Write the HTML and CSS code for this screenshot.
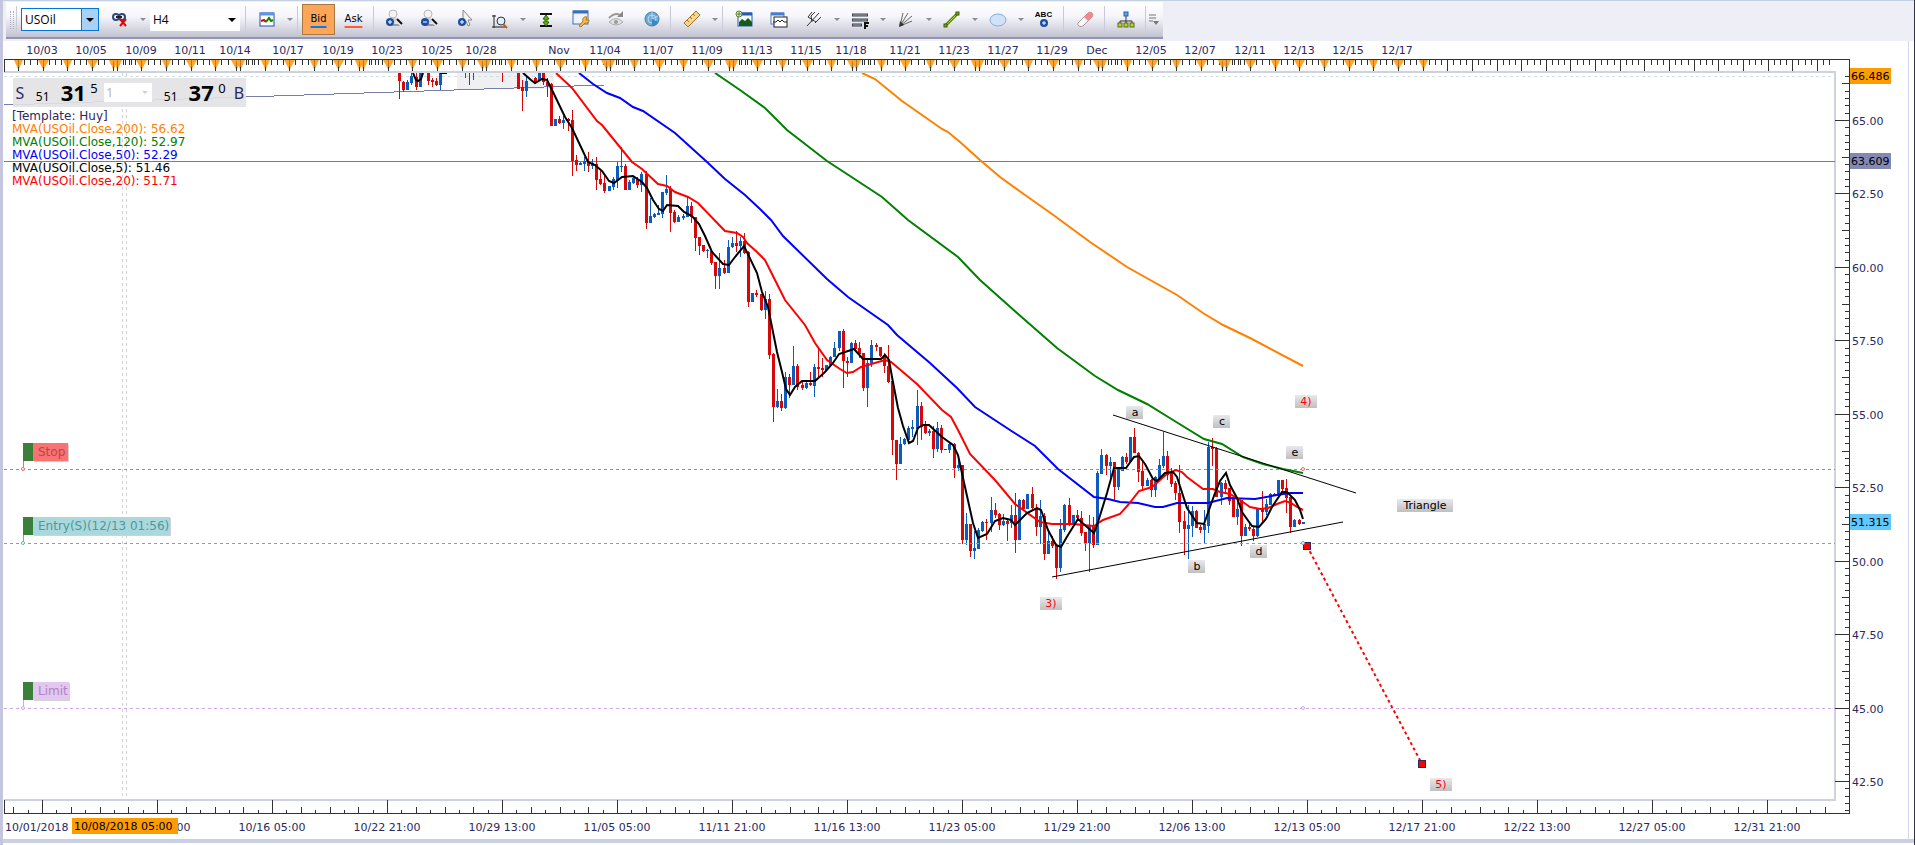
FILE: index.html
```
<!DOCTYPE html>
<html lang="en">
<head>
    <meta charset="UTF-8">
    <meta name="viewport" content="width=device-width, initial-scale=1.0">
    <title>USOil H4</title>
    <link rel="stylesheet" href="styles.css">
</head>
<body>

    <header class="toolbar-band">
        <div class="toolbar">
            <span class="grip"></span>
            <span class="sep"></span>
            <div class="symbol-box">
                <input type="text" value="USOil" aria-label="Symbol">
                <button type="button" aria-label="Choose symbol"><i class="caret black"></i></button>
            </div>
            <button type="button" class="tool drop" aria-label="Unlink">
                <svg width="20" height="24" viewBox="0 0 20 24">
                    <g fill="none" stroke="#2c4a78" stroke-width="2"><circle cx="6" cy="9" r="3"/><circle cx="12" cy="9" r="3"/></g>
                    <path d="M6 9h6" stroke="#222" stroke-width="2"/>
                    <path d="M10 11l6 7M16 11l-6 7" stroke="#e00" stroke-width="2"/>
                </svg><i class="caret"></i>
            </button>
            <div class="period-box">
                <select aria-label="Period"><option>H4</option></select>
                <i class="caret black"></i>
            </div>
            <span class="sep"></span>
            <button type="button" class="tool drop" aria-label="Chart type">
                <svg width="20" height="24" viewBox="0 0 20 24">
                    <rect x="3" y="5" width="14" height="13" fill="#fff" stroke="#1f4fae"/>
                    <path d="M3 6h14" stroke="#5e93e6" stroke-width="3"/>
                    <path d="M4 13l3-1 2 2" fill="none" stroke="#e00" stroke-width="2"/>
                    <path d="M9 14l3-4 2 3 2-1" fill="none" stroke="#080" stroke-width="2"/>
                </svg><i class="caret"></i>
            </button>
            <span class="sep"></span>
            <button type="button" class="tool price active">Bid</button>
            <button type="button" class="tool price ask">Ask</button>
            <span class="sep"></span>
            <button type="button" class="tool" aria-label="Zoom in">
                <svg width="20" height="24" viewBox="0 0 20 24">
                    <path d="M6 13l3-4 3 2-2 5z" fill="#d2d2d6"/>
                    <circle cx="8" cy="6" r="4" fill="#f4f4f4" stroke="#b8b8b8"/>
                    <path d="M12 11l5 5" stroke="#111" stroke-width="2"/><path d="M5 16h8l2 2H4z" fill="#9a9aa6"/>
                    <circle cx="5" cy="14" r="4" fill="#1c4fa4"/><path d="M3 14h4M5 12v4" stroke="#fff"/>
                </svg>
            </button>
            <button type="button" class="tool" aria-label="Zoom out">
                <svg width="20" height="24" viewBox="0 0 20 24">
                    <path d="M6 13l3-4 3 2-2 5z" fill="#d2d2d6"/>
                    <circle cx="8" cy="6" r="4" fill="#f4f4f4" stroke="#b8b8b8"/>
                    <path d="M12 11l5 5" stroke="#111" stroke-width="2"/><path d="M5 16h8l2 2H4z" fill="#9a9aa6"/>
                    <circle cx="5" cy="14" r="4" fill="#1c4fa4"/><path d="M3 14h4" stroke="#fff"/>
                </svg>
            </button>
            <button type="button" class="tool" aria-label="Add pointer">
                <svg width="20" height="24" viewBox="0 0 20 24">
                    <path d="M8 2v14l3-3 2 5 2-1-2-5h4z" fill="#f4f4f4" stroke="#888"/>
                    <circle cx="7" cy="14" r="4" fill="#1c4fa4"/><path d="M5 14h4M7 12v4" stroke="#fff"/>
                </svg>
            </button>
            <button type="button" class="tool drop" aria-label="Zoom area">
                <svg width="20" height="24" viewBox="0 0 20 24">
                    <path d="M4 7v13M2 8h4M2 19h14" fill="none" stroke="#222"/>
                    <circle cx="11" cy="13" r="4" fill="#d9f1fb" stroke="#333"/><path d="M13 16l4 4" stroke="#b5651d" stroke-width="2"/>
                </svg><i class="caret"></i>
            </button>
            <button type="button" class="tool" aria-label="Fit height">
                <svg width="20" height="24" viewBox="0 0 20 24">
                    <path d="M4 6h12M4 18h12" stroke="#111" stroke-width="2"/>
                    <path d="M10 7l3 4h-2v3h2l-3 4-3-4h2v-3H7z" fill="#6a2" stroke="#260"/>
                </svg>
            </button>
            <button type="button" class="tool" aria-label="Chart properties">
                <svg width="20" height="24" viewBox="0 0 20 24">
                    <rect x="2" y="3" width="15" height="13" fill="#eef4ff" stroke="#3a6cc0"/><path d="M2 4h15" stroke="#3a6cc0" stroke-width="3"/>
                    <path d="M8 18l4-5a3 3 0 0 1 4-4l-1 3 3 0a3 3 0 0 1-4 3l-4 4z" fill="#f6bd3c" stroke="#b47a10"/>
                </svg>
            </button>
            <button type="button" class="tool" aria-label="Refresh view">
                <svg width="20" height="24" viewBox="0 0 20 24">
                    <path d="M3 14q7-7 14 0q-7 6-14 0z" fill="#e2e2e2" stroke="#aaa"/><circle cx="10" cy="14" r="2" fill="#999"/>
                    <path d="M3 10q6-6 11-3" fill="none" stroke="#999" stroke-width="2"/><path d="M17 3v6h-6z" fill="#888"/>
                </svg>
            </button>
            <button type="button" class="tool" aria-label="Trade zones">
                <svg width="20" height="24" viewBox="0 0 20 24">
                    <circle cx="11" cy="11" r="7" fill="#6fa9d4" stroke="#3d7db2"/>
                    <g fill="none" stroke="#b9daf0"><circle cx="11" cy="11" r="4"/><path d="M11 11V4M11 11l6-3"/></g><path d="M11 11l6 3a7 7 0 0 1-6 4z" fill="#3d87c0"/>
                </svg>
            </button>
            <span class="sep"></span>
            <button type="button" class="tool drop" aria-label="Ruler">
                <svg width="20" height="24" viewBox="0 0 20 24">
                    <path d="M2 15L14 3l4 4L6 19z" fill="#f4d58e" stroke="#a5722a"/>
                    <path d="M5 12l2 2M8 9l2 2M11 6l2 2" stroke="#a5722a"/>
                </svg><i class="caret"></i>
            </button>
            <span class="sep"></span>
            <button type="button" class="tool" aria-label="Save picture">
                <svg width="20" height="24" viewBox="0 0 20 24">
                    <rect x="4" y="5" width="14" height="13" fill="#f3f8ff" stroke="#2a5ab0"/><path d="M4 6h14" stroke="#2a5ab0" stroke-width="3"/>
                    <path d="M5 18v-4l3-3 3 2 3-3 4 4v4z" fill="#175c17"/>
                    <circle cx="5" cy="6" r="3" fill="#e9f5d8" stroke="#577f22"/><path d="M5 4v4M3 6h4" stroke="#577f22"/>
                </svg>
            </button>
            <button type="button" class="tool" aria-label="Add window">
                <svg width="20" height="24" viewBox="0 0 20 24">
                    <rect x="2" y="5" width="13" height="11" fill="#fff" stroke="#4a7bd0"/><path d="M2 6h13" stroke="#4a7bd0" stroke-width="3"/>
                    <rect x="5" y="9" width="13" height="10" fill="#fff" stroke="#222"/><path d="M4 14h3l2-2 2 2 2-2 2 2h3" fill="none" stroke="#222"/>
                </svg>
            </button>
            <button type="button" class="tool drop" aria-label="Pitchfork">
                <svg width="20" height="24" viewBox="0 0 20 24">
                    <path d="M3 18L15 5M4 9l8 5M4 9l4-5M8 14l-1-6 4-4M11 15l6-6" fill="none" stroke="#333"/>
                </svg><i class="caret"></i>
            </button>
            <button type="button" class="tool drop" aria-label="Fibonacci levels">
                <svg width="20" height="24" viewBox="0 0 20 24">
                    <path d="M2 7h16M2 12h16M2 17h10" stroke="#3b4048" stroke-width="3"/>
                    <path d="M3 7h14M3 12h14M3 17h8" stroke="#aab0ba"/>
                    <path d="M15 21v-6h4M15 18h3" fill="none" stroke="#111" stroke-width="2"/>
                </svg><i class="caret"></i>
            </button>
            <button type="button" class="tool drop" aria-label="Fan">
                <svg width="20" height="24" viewBox="0 0 20 24">
                    <path d="M4 18L7 5M4 18L12 5M4 18L16 8M4 18l12-5" stroke="#666"/><path d="M3 19l1-6 4 4z" fill="#333"/>
                </svg><i class="caret"></i>
            </button>
            <button type="button" class="tool drop" aria-label="Line">
                <svg width="20" height="24" viewBox="0 0 20 24">
                    <path d="M4 17L15 6" stroke="#567d0e" stroke-width="3"/><path d="M4 17L15 6" stroke="#b5d334"/>
                    <g fill="#7fa51c" stroke="#3f5c08"><rect x="2" y="16" width="3" height="3"/><rect x="14" y="4" width="3" height="3"/></g>
                </svg><i class="caret"></i>
            </button>
            <button type="button" class="tool drop" aria-label="Ellipse">
                <svg width="20" height="24" viewBox="0 0 20 24">
                    <ellipse cx="10" cy="12" rx="8" ry="6" fill="#cfe2f6" stroke="#86abd8"/>
                </svg><i class="caret"></i>
            </button>
            <button type="button" class="tool abc" aria-label="Add text">
                <span>ABC</span>
                <svg width="8" height="10" viewBox="0 0 8 10"><circle cx="4" cy="4" r="4" fill="#1c4fa4"/><path d="M2 4h4M4 2v4" stroke="#fff"/></svg>
            </button>
            <span class="sep"></span>
            <button type="button" class="tool" aria-label="Erase">
                <svg width="20" height="24" viewBox="0 0 20 24">
                    <path d="M3 15L13 5q2-2 4 0t0 4L8 18q-2 1-4 0t-1-3z" fill="#fafafa" stroke="#a99"/>
                    <path d="M9 9l4-4q2-2 4 0t0 4l-4 4z" fill="#f08a8a"/>
                </svg>
            </button>
            <span class="sep"></span>
            <button type="button" class="tool" aria-label="Strategy tree">
                <svg width="20" height="24" viewBox="0 0 20 24">
                    <path d="M10 8v8M4 17v-4h12v4" fill="none" stroke="#333"/>
                    <rect x="8" y="4" width="4" height="4" fill="#5aa0ee" stroke="#2563b0"/>
                    <g fill="#b9cf3c" stroke="#57700c"><rect x="2" y="15" width="4" height="4"/><rect x="8" y="15" width="4" height="4"/><rect x="14" y="15" width="4" height="4"/></g>
                </svg>
            </button>
            <span class="sep"></span>
            <button type="button" class="more" aria-label="More buttons">
                <svg width="10" height="12" viewBox="0 0 10 12"><path d="M0 1h7M0 4h7M0 7h4" stroke="#777"/><path d="M4 7h6l-3 4z" fill="#777"/></svg>
            </button>
        </div>
    </header>

    <main class="chart" id="chart">
        <svg class="canvas" id="canvas"></svg>

        <div class="quote">
            <button type="button" class="side">S</button>
            <span class="small">51</span><strong>31</strong><sup>5</sup>
            <div class="amount">
                <select aria-label="Amount"><option>1</option></select>
                <i class="caret"></i>
            </div>
            <span class="small">51</span><strong>37</strong><sup>0</sup>
            <button type="button" class="side">B</button>
        </div>

        <ul class="legend">
            <li>[Template: Huy]</li>
            <li class="mva200">MVA(USOil.Close,200): 56.62</li>
            <li class="mva120">MVA(USOil.Close,120): 52.97</li>
            <li class="mva50">MVA(USOil.Close,50): 52.29</li>
            <li class="mva5">MVA(USOil.Close,5): 51.46</li>
            <li class="mva20">MVA(USOil.Close,20): 51.71</li>
        </ul>
    </main>

    <div class="bottom-edge"></div>

    <script src="chart.js"></script>
</body>
</html>
```
FILE: styles.css
```
* {
    box-sizing: border-box;
}

body {
    display: flex;
    flex-direction: column;
    min-height: 100vh;
    margin: 0;
    border-left: 3px solid #c3c6dc;
    border-right: 1px solid #333344;
    background: white;
    font-family: "DejaVu Sans", Verdana, sans-serif;
    font-size: 11px;
    color: #2b2860;
}

button, input, select {
    margin: 0;
    padding: 0;
    border: none;
    background: none;
    font: inherit;
    color: inherit;
    appearance: none;
}

/* Toolbar */
.toolbar-band {
    height: 41px;
    padding: 1px 0 0 3px;
    background: #eeeef6;
    border-top: 1px solid #c3cfe2;
}

.toolbar {
    display: flex;
    align-items: center;
    width: max-content;
    height: 37px;
    padding-left: 4px;
    background: linear-gradient(white, #f6f6fb 40%, #c2c3d2);
    border-bottom: 2px solid #9495ab;
}

.grip {
    width: 4px;
    height: 18px;
    border-left: 1px dotted #aaaabc;
    border-right: 1px dotted #aaaabc;
}

.sep {
    width: 1px;
    height: 28px;
    margin: 0 3px 0 2px;
    background: #c9cad8;
}

.symbol-box {
    display: flex;
    width: 78px;
    height: 23px;
    margin: 0 3px 0 1px;
    border: 1px solid #0078d7;
    background: white;
    font-family: "Open Sans", sans-serif;
    font-size: 12px;
    color: black;
}

.symbol-box input {
    flex: 1;
    min-width: 0;
    padding-left: 3px;
}

.symbol-box button {
    display: flex;
    align-items: center;
    justify-content: center;
    width: 17px;
    border-left: 1px solid #0078d7;
    background: #a9d1f5;
}

.caret {
    width: 0;
    height: 0;
    border: 3px solid transparent;
    border-top-color: #8a8b9a;
    border-bottom: none;
}

.caret.black {
    border-width: 4px 4px 0;
    border-top-color: black;
}

.period-box {
    display: flex;
    align-items: center;
    width: 90px;
    height: 22px;
    margin: 0 3px 0 2px;
    padding-right: 4px;
    background: white;
    font-family: "Open Sans", sans-serif;
    font-size: 12px;
    color: black;
}

.period-box select {
    flex: 1;
    padding-left: 3px;
}

.tool {
    display: flex;
    align-items: center;
    justify-content: center;
    width: 35px;
    height: 31px;
}

.tool.drop {
    justify-content: flex-start;
    width: 46px;
    padding-left: 8px;
    gap: 10px;
}

.tool.price {
    padding-bottom: 2px;
    font-size: 10px;
    line-height: 12px;
    color: black;
    text-decoration: underline 2px #ff5a36;
    text-underline-offset: 4px;
}

.tool.price.active {
    width: 33px;
    margin: 0 1px;
    background: #fda65a;
    border: 1px solid #a8793c;
    text-decoration-color: #0a7ae6;
}

.abc {
    flex-direction: column;
    align-items: center;
    font-family: "Liberation Sans", sans-serif;
    font-size: 8px;
    font-weight: bold;
    line-height: 8px;
    color: black;
}

.more {
    display: flex;
    align-items: center;
    width: 14px;
    height: 31px;
}

/* Chart */
.chart {
    position: relative;
    flex: 1;
    margin: 0 6px 0 1px;
    box-shadow: 1px 0 #d4d8ee;
}

.canvas {
    display: block;
    position: absolute;
    width: 100%;
    height: 100%;
}

.canvas text {
    fill: #2b2860;
}

.canvas .dark { fill: black; }
.canvas .red { fill: red; }
.canvas .order { font-size: 12px; }
.canvas .stop { fill: #b44848; }
.canvas .entry { fill: #4a9a9c; }
.canvas .limit { fill: #b083c8; }

.quote {
    position: absolute;
    left: 9px;
    top: 37px;
    display: flex;
    align-items: center;
    width: 233px;
    height: 29px;
    background: rgba(226, 226, 230, 0.9);
    font-family: "Noto Sans", sans-serif;
    font-size: 12px;
    color: black;
}

.side {
    width: 14px;
    margin-right: 9px;
    font-size: 16px;
    color: #2b2860;
}

.quote .small {
    width: 25px;
    padding-top: 8px;
}

.quote strong {
    width: 30px;
    font-size: 22px;
    line-height: 29px;
}

.quote sup {
    align-self: flex-start;
    width: 14px;
    font-size: 13px;
    line-height: 20px;
}

.amount {
    display: flex;
    align-items: center;
    width: 48px;
    height: 19px;
    margin-right: 12px;
    padding: 0 4px 0 2px;
    background: white;
    color: #b4b4b4;
}

.amount .caret {
    border-top-color: #d0d0d0;
}

.amount select {
    flex: 1;
}

.quote .side:last-child {
    margin: 0;
}

.legend {
    position: absolute;
    left: 8px;
    top: 69px;
    margin: 0;
    padding: 0;
    list-style: none;
    font-size: 12px;
    line-height: 13px;
}

.mva200 { color: #ff8000; }
.mva120 { color: green; }
.mva50 { color: blue; }
.mva5 { color: black; }
.mva20 { color: red; }

.bottom-edge {
    height: 4px;
    margin-bottom: 2px;
    background: #c9d0e4;
}
```
FILE: chart.js
```
// Bars: index, high, body top, body bottom, low, direction
const bars = `-83 73 73 81 99 d;-82 81 82 90 92 d;-81 80 82 90 90 u;-80 73 76 83 85 u;-79 73 77 87 90 d;-78 73 73 87 87 u
-76 73 73 81 85 d;-75 78 80 82 87 d;-74 78 81 85 86 d;-73 73 73 85 90 u;-67 73 73 73 78 u;-66 73 73 73 85 d;-65 73 73 73 80 u;-58 73 73 73 82 d
-54 73 73 89 89 d;-53 80 87 91 111 d;-52 77 81 91 97 u;-50 77 78 82 84 d;-49 73 73 80 80 u;-48 73 73 82 85 d;-47 78 82 86 97 d
-46 83 84 126 126 d;-45 119 119 126 126 u;-44 116 119 123 124 d;-43 116 120 123 129 u;-42 118 119 121 131 d;-41 110 120 161 176 d
-40 155 160 165 171 d;-39 162 163 165 165 u;-38 157 161 164 171 u;-37 152 161 166 172 d;-36 159 163 166 169 u;-35 157 164 180 190 d
-34 171 179 184 185 d;-33 175 183 191 193 d;-32 186 186 191 191 u;-31 177 179 187 190 u;-30 162 166 180 188 u;-29 147 166 167 172 u
-28 164 166 190 190 d;-27 180 182 190 190 u;-26 176 178 183 184 u;-25 177 179 185 188 d;-24 172 174 185 192 u;-23 171 174 223 229 d
-22 198 216 223 223 u;-21 213 214 217 218 u;-20 205 213 215 215 u;-19 192 192 214 218 u;-18 175 189 193 195 u;-17 186 189 213 232 d
-16 210 212 222 223 d;-15 215 217 222 222 u;-14 214 216 218 220 u;-13 197 206 217 217 u;-12 202 206 217 223 d;-11 217 217 238 251 d
-10 237 237 246 255 d;-9 245 245 251 252 d;-8 249 250 251 258 u;-7 250 251 263 265 d;-6 262 262 276 289 d;-5 253 268 276 289 u
-4 260 268 273 274 d;-3 240 247 273 273 u;-2 237 243 247 248 u;-1 231 243 246 252 d;0 237 241 246 257 u;1 233 241 253 254 d
2 251 252 302 307 d;3 293 293 302 302 u;4 290 293 295 297 d;5 294 294 310 311 d;6 291 299 310 319 u;7 294 299 355 359 d
8 353 354 407 422 d;9 389 401 407 408 u;10 394 401 408 411 d;11 372 377 408 409 u;12 374 377 385 398 d;13 346 366 385 385 u
14 364 366 387 390 d;15 382 385 388 390 d;16 382 383 388 389 u;17 372 383 385 386 d;18 364 367 386 397 u;19 348 367 369 378 d
20 358 368 370 377 d;21 365 365 370 370 u;22 356 357 365 367 u;23 342 348 357 357 u;24 331 331 348 351 u;25 329 331 361 388 d
26 357 361 363 377 d;27 342 343 363 363 u;28 340 343 349 351 d;29 342 348 354 358 d;30 353 353 388 391 d;31 358 363 388 407 u
32 340 345 363 367 u;33 343 345 347 351 d;34 347 347 356 357 d;35 353 355 366 373 d;36 345 366 382 383 d;37 381 381 440 455 d
38 440 440 464 480 d;39 437 444 464 464 u;40 438 439 444 445 u;41 426 428 440 441 u;42 420 427 429 437 u;43 390 406 429 445 u
44 402 406 427 440 d;45 421 426 433 434 d;46 429 431 433 436 u;47 426 431 449 458 d;48 422 428 449 452 u;49 425 428 450 453 d
50 449 449 450 450 d;51 443 444 450 453 u;52 443 444 468 478 d;53 456 465 468 471 u;54 465 465 540 544 d;55 513 524 540 545 u
56 524 524 551 557 d;57 531 548 551 559 u;58 528 530 549 549 u;59 521 522 531 532 u;60 519 522 523 540 d;61 497 510 523 532 u
62 503 510 515 518 d;63 513 514 525 530 d;64 514 521 525 526 u;65 519 521 524 541 d;66 505 515 523 528 u;67 493 515 540 553 d
68 499 500 540 540 u;69 499 500 509 510 d;70 494 494 509 509 u;71 487 494 508 510 d;72 504 508 527 536 d;73 500 516 527 544 u
74 513 516 554 560 d;75 532 541 554 554 u;76 536 541 546 548 d;77 544 545 568 579 d;78 519 529 568 572 u;79 504 505 530 532 u
80 498 505 525 526 d;81 515 515 525 526 u;82 510 515 518 520 d;83 511 518 533 536 d;84 532 532 543 551 d;85 515 526 543 572 u
86 517 526 545 548 d;87 471 473 545 545 u;88 449 455 474 474 u;89 454 455 466 475 d;90 457 462 466 478 u;91 462 462 487 500 d
92 469 469 487 490 u;93 456 457 471 471 u;94 453 457 462 464 d;95 437 437 462 463 u;96 428 437 453 453 d;97 452 453 472 482 d
98 461 471 486 490 d;99 478 480 486 486 u;100 479 480 490 497 d;101 476 477 490 497 u;102 459 465 478 480 u;103 432 456 466 468 u
104 451 456 475 480 d;105 468 472 484 487 d;106 481 483 493 500 d;107 465 493 522 533 d;108 511 521 529 555 d;109 505 525 529 559 u
110 506 511 526 537 u;111 510 511 528 528 d;112 525 527 530 533 d;113 510 524 530 543 u;114 442 447 526 533 u;115 438 447 449 466 d
116 447 448 497 497 d;117 482 483 497 505 u;118 480 483 489 493 d;119 488 488 501 505 d;120 496 497 517 517 d;121 497 509 517 525 u
122 500 500 536 546 d;123 524 527 536 536 u;124 523 527 529 531 d;125 527 529 536 541 d;126 509 509 536 537 u;127 491 509 512 524 d
128 499 504 512 515 u;129 493 494 505 505 u;130 493 494 495 496 d;131 480 480 494 494 u;132 480 480 489 491 d;133 479 488 498 513 d
134 497 497 527 533 d;135 519 520 527 527 u;136 519 520 524 525 d;137 522 522 524 524 u`.split(/[;\n]/).map(b => b.split(" "));

const averages = [
    ["#ff8000", "862,73 875,79 902,101 942,129 948,132 960,142 980,160 1000,177 1025,195 1052,214 1090,242 1127,267 1177,295 1203,313 1223,325 1250,338 1303,366"],
    ["green", "715,73 740,90 765,108 787,130 827,161 850,176 882,197 908,220 958,257 980,280 1017,313 1057,348 1095,376 1118,390 1147,404 1173,420 1204,439 1222,444 1243,457 1263,464 1283,469 1303,473"],
    ["blue", "579,73 593,84 607,93 620,98 633,107 643,111 675,133 707,162 725,179 745,195 760,209 771,220 783,236 827,279 848,297 888,325 897,335 930,363 957,388 975,407 1013,432 1035,446 1058,469 1094,497 1108,499 1120,502 1138,503 1155,507 1163,507 1177,503 1208,503 1227,498 1255,499 1277,495 1290,493 1303,493"],
    ["red", "556,73 572,88 597,121 602,125 632,162 642,169 658,184 667,186 675,192 688,197 698,203 725,231 737,233 743,237 747,243 757,252 765,260 775,280 785,300 805,325 815,343 827,360 840,369 847,373 853,372 861,367 885,360 891,362 897,367 917,384 942,410 951,417 958,430 970,454 995,480 1015,504 1040,522 1052,524 1073,524 1094,526 1103,520 1120,514 1128,505 1139,491 1152,487 1168,473 1176,470 1182,472 1187,477 1203,489 1213,489 1220,492 1230,494 1240,500 1250,507 1260,509 1268,508 1277,504 1285,501 1291,503 1297,507 1303,510"],
    ["black", "413,73 416,80 418,81 421,79 423,73"],
    ["black", "440,73 447,73"],
    ["black", "523,73 531,80 535,83 542,79 547,80 553,92 565,117 572,128 580,145 588,162 595,165 602,171 609,181 614,183 622,177 633,176 642,182 647,188 653,200 659,209 663,211 667,205 678,206 684,212 692,216 699,224 705,236 712,252 723,264 729,265 735,257 744,246 757,273 762,292 768,307 777,352 782,372 786,389 790,395 795,387 802,381 815,381 825,372 833,363 839,354 854,349 863,359 881,359 885,355 889,360 892,377 898,408 903,426 909,443 913,441 918,428 923,425 929,425 942,437 953,445 958,455 965,487 973,523 978,538 987,534 995,521 1003,518 1011,520 1015,525 1027,513 1037,508 1041,510 1048,530 1056,545 1061,547 1068,535 1078,519 1087,527 1094,533 1098,522 1107,493 1114,468 1126,468 1134,457 1139,456 1145,464 1153,479 1157,481 1165,473 1173,472 1177,477 1187,508 1197,523 1204,524 1210,507 1215,493 1220,481 1226,473 1230,485 1237,498 1242,512 1252,526 1259,527 1266,519 1272,507 1282,492 1287,492 1295,500 1300,510 1303,519"]
];

const dayLabels = [[42, "10/03"], [91, "10/05"], [141, "10/09"], [190, "10/11"], [235, "10/14"], [288, "10/17"], [338, "10/19"],
    [387, "10/23"], [437, "10/25"], [481, "10/28"], [559, "Nov"], [605, "11/04"], [658, "11/07"], [707, "11/09"], [757, "11/13"],
    [806, "11/15"], [851, "11/18"], [905, "11/21"], [954, "11/23"], [1003, "11/27"], [1052, "11/29"], [1097, "Dec"],
    [1151, "12/05"], [1200, "12/07"], [1250, "12/11"], [1299, "12/13"], [1348, "12/15"], [1397, "12/17"]];

const timeLabels = ["10/10 13:00", "10/16 05:00", "10/22 21:00", "10/29 13:00", "11/05 05:00", "11/11 21:00", "11/16 13:00",
    "11/23 05:00", "11/29 21:00", "12/06 13:00", "12/13 05:00", "12/17 21:00", "12/22 13:00", "12/27 05:00", "12/31 21:00"];

// Wave marks: x, y, width, text, class
const marks = [[1126, 406, 17, "a", "dark"], [1213, 415, 17, "c", "dark"], [1286, 446, 17, "e", "dark"], [1188, 560, 17, "b", "dark"],
    [1250, 545, 17, "d", "dark"], [1040, 597, 22, "3)", "red"], [1295, 395, 22, "4)", "red"], [1430, 778, 22, "5)", "red"],
    [1397, 499, 56, "Triangle", "dark"]];

// Orders: y of the line, tag width, text, class, line colour, tag colour
const orders = [[469, 35, "Stop", "order stop", "#f26a60", "#fb7272"], [543, 137, "Entry(S)(12/13 01:56)", "order entry", "#6aaeb4", "#abd8dc"],
    [708, 36, "Limit", "order limit", "#cda8e4", "#e2c8ee"]];

const LEFT = 4, TOP = 41;
const priceY = p => Math.round(120 + (65 - p) * 29.38) + 0.5;
const line = (x1, y1, x2, y2, color, extra = "") => `<path d="M${x1} ${y1}L${x2} ${y2}" stroke="${color}" ${extra}/>`;
const text = (x, y, value, cls = "", anchor = "start") => `<text x="${x}" y="${y}" class="${cls}" text-anchor="${anchor}">${value}</text>`;
const box = (x, y, w, h, color) => `<rect x="${x}" y="${y}" width="${w}" height="${h}" fill="${color}"/>`;

function drawPlot(right, bottom) {
    const dash = 'stroke-dasharray="3 3"';
    let s = box(457, 73, 97, 16, "#f0eff1");
    s += line(LEFT, 76.5, right, 76.5, "#cfdfdf", dash);
    s += line(122.5, 73, 122.5, bottom, "#cfd2d6", dash) + line(126.5, 73, 126.5, bottom, "#cfd2d6", dash);
    s += line(LEFT, 161.5, right, 161.5, "#7378a8");
    s += line(LEFT, 105, 604, 85, "#777ca8", 'shape-rendering="crispEdges"');

    for (const [i, high, top, low, bot, dir] of bars) {
        const x = Math.round(740 + i * 4.107);
        const color = dir === "u" ? "#0a5cc0" : "#d80808";
        s += box(x, high, 1, Math.max(bot - high, 1), color);
        if (+low > +top) s += box(x - 1, top, 3, low - top, color);
    }

    orders.forEach(o => s += line(LEFT, o[0] + 0.5, right, o[0] + 0.5, o[4], dash));
    averages.forEach(([color, points]) => {
        s += `<polyline points="${points}" fill="none" stroke="${color}" stroke-width="2"/>`;
    });

    s += line(1113, 415, 1356, 493, "black") + line(1052, 577, 1343, 522, "black");
    s += line(1307, 546, 1422, 764, "red", 'stroke-width="2" stroke-dasharray="3 3"');
    s += `<g fill="red" stroke="#2b2860"><rect x="1303.5" y="542.5" width="7" height="7"/><rect x="1418.5" y="760.5" width="7" height="7"/></g>`;

    for (const [y, w, label, cls, color, fill] of orders) {
        s += line(23.5, y - 8, 23.5, y - 2, color);
        s += `<g fill="white" stroke="${color}"><circle cx="23" cy="${y}" r="1.5"/><circle cx="1303" cy="${y}" r="1.5"/></g>`;
        s += box(34, y - 25, w, 18, "#d0d0d8") + box(23, y - 26, 10, 18, "#3a7f3a") + box(33, y - 26, w, 18, fill);
        s += text(38, y - 13, label, cls);
    }

    for (const [x, y, w, label, cls] of marks) {
        s += box(x, y, w, 13, "url(#mark)") + text(x + Math.round(w / 2), y + 10, label, cls, "middle");
    }
    return s;
}

function drawDays(right) {
    let s = line(LEFT, 59.5, right + 14, 59.5, "#333");
    const majors = [];
    for (let week = -1; week < 10; week++) {
        const start = 116.7 + week * 123.2;
        if (week >= 0) majors.push(start - 4);
        for (let d = 0; d < 5; d++) majors.push(start + d * 24.64);
    }
    for (let x = 1348.7; x < right; x += 24.64) majors.push(x);
    for (const start of majors.filter(x => x > LEFT)) {
        const x = Math.round(start);
        for (let t = 1; t < 4; t++) {
            const tx = Math.round(start + t * 6.16) + 0.5;
            if (tx < right) s += line(tx, 60, tx, 65, "#333");
        }
        if (x < 1430) {
            const half = dayLabels.some(d => Math.abs(d[0] - x) < 2) ? 5 : 4;
            s += `<path d="M${x - half} 60h${half * 2 + 1}l${-half} 9h-1z" fill="#ffa42c"/>`;
        }
        s += line(x + 0.5, 60, x + 0.5, 71, x < 1430 ? "#b87820" : "#333") + line(x + 0.5, 67, x + 0.5, 71, "#333");
    }
    s += line(LEFT + 0.5, 59, LEFT + 0.5, 72, "#333");
    dayLabels.forEach(([x, label]) => s += text(x, 54, label, "", "middle"));
    return s;
}

function drawTimes(right, axis) {
    let s = line(LEFT, axis + 0.5, right + 15, axis + 0.5, "#333") + line(LEFT + 0.5, axis - 13, LEFT + 0.5, axis, "#333");
    for (let i = -2; ; i++) {
        const x = Math.round(42 + i * 14.375) + 0.5;
        if (x > right) break;
        const size = i % 8 === 0 ? 13 : i % 2 === 0 ? 6 : 3;
        s += line(x, axis - size, x, axis, "#333");
    }
    s += text(5, axis + 18, "10/01/2018");
    timeLabels.forEach((label, i) => s += text(157 + i * 115, axis + 18, label, "", "middle"));
    // crosshair time covers the label under it
    s += box(72, axis + 5, 106, 16, "#ff9c00") + text(74, axis + 17, "10/08/2018 05:00", "dark");
    return s;
}

function drawPrices(right, axis) {
    const edge = right + 14;
    let s = line(edge + 0.5, 59, edge + 0.5, axis, "#333");
    for (let p = 66.5; priceY(p) < axis; p -= 0.25) {
        const size = p % 2.5 === 0 ? 14 : p % 1.25 === 0 ? 7 : 4;
        s += line(edge - size, priceY(p), edge, priceY(p), "#333");
        if (size === 14) s += text(edge + 3, priceY(p) + 4.5, p.toFixed(2));
    }
    for (const [y, label, color] of [[68, "66.486", "#ff9c00"], [153, "63.609", "#8489b4"], [514, "51.315", "#62c8fc"]]) {
        s += box(edge + 1, y, 41, 16, color) + text(edge + 2, y + 12, label, "dark");
    }
    return s;
}

function draw() {
    const chart = document.getElementById("chart");
    const right = LEFT + chart.clientWidth - 73;
    const axis = TOP + chart.clientHeight - 26;
    const bottom = axis - 13;
    document.getElementById("canvas").innerHTML = `
        <defs>
            <linearGradient id="mark" x1="0" y1="0" x2="0" y2="1"><stop stop-color="#e8e8ee"/><stop offset="1" stop-color="#c0c0c0"/></linearGradient>
            <clipPath id="plot"><rect x="${LEFT}" y="73" width="${right - LEFT}" height="${bottom - 73}"/></clipPath>
        </defs>
        <g transform="translate(${-LEFT} ${-TOP})">
            <path d="M${LEFT} 72H${right}V${bottom}H${LEFT}" fill="none" stroke="#cdd2de" stroke-width="2"/>
            <g clip-path="url(#plot)">${drawPlot(right, bottom)}</g>
            ${drawDays(right)}${drawTimes(right, axis)}${drawPrices(right, axis)}
        </g>`;
}

draw();
window.addEventListener("resize", draw);
```
